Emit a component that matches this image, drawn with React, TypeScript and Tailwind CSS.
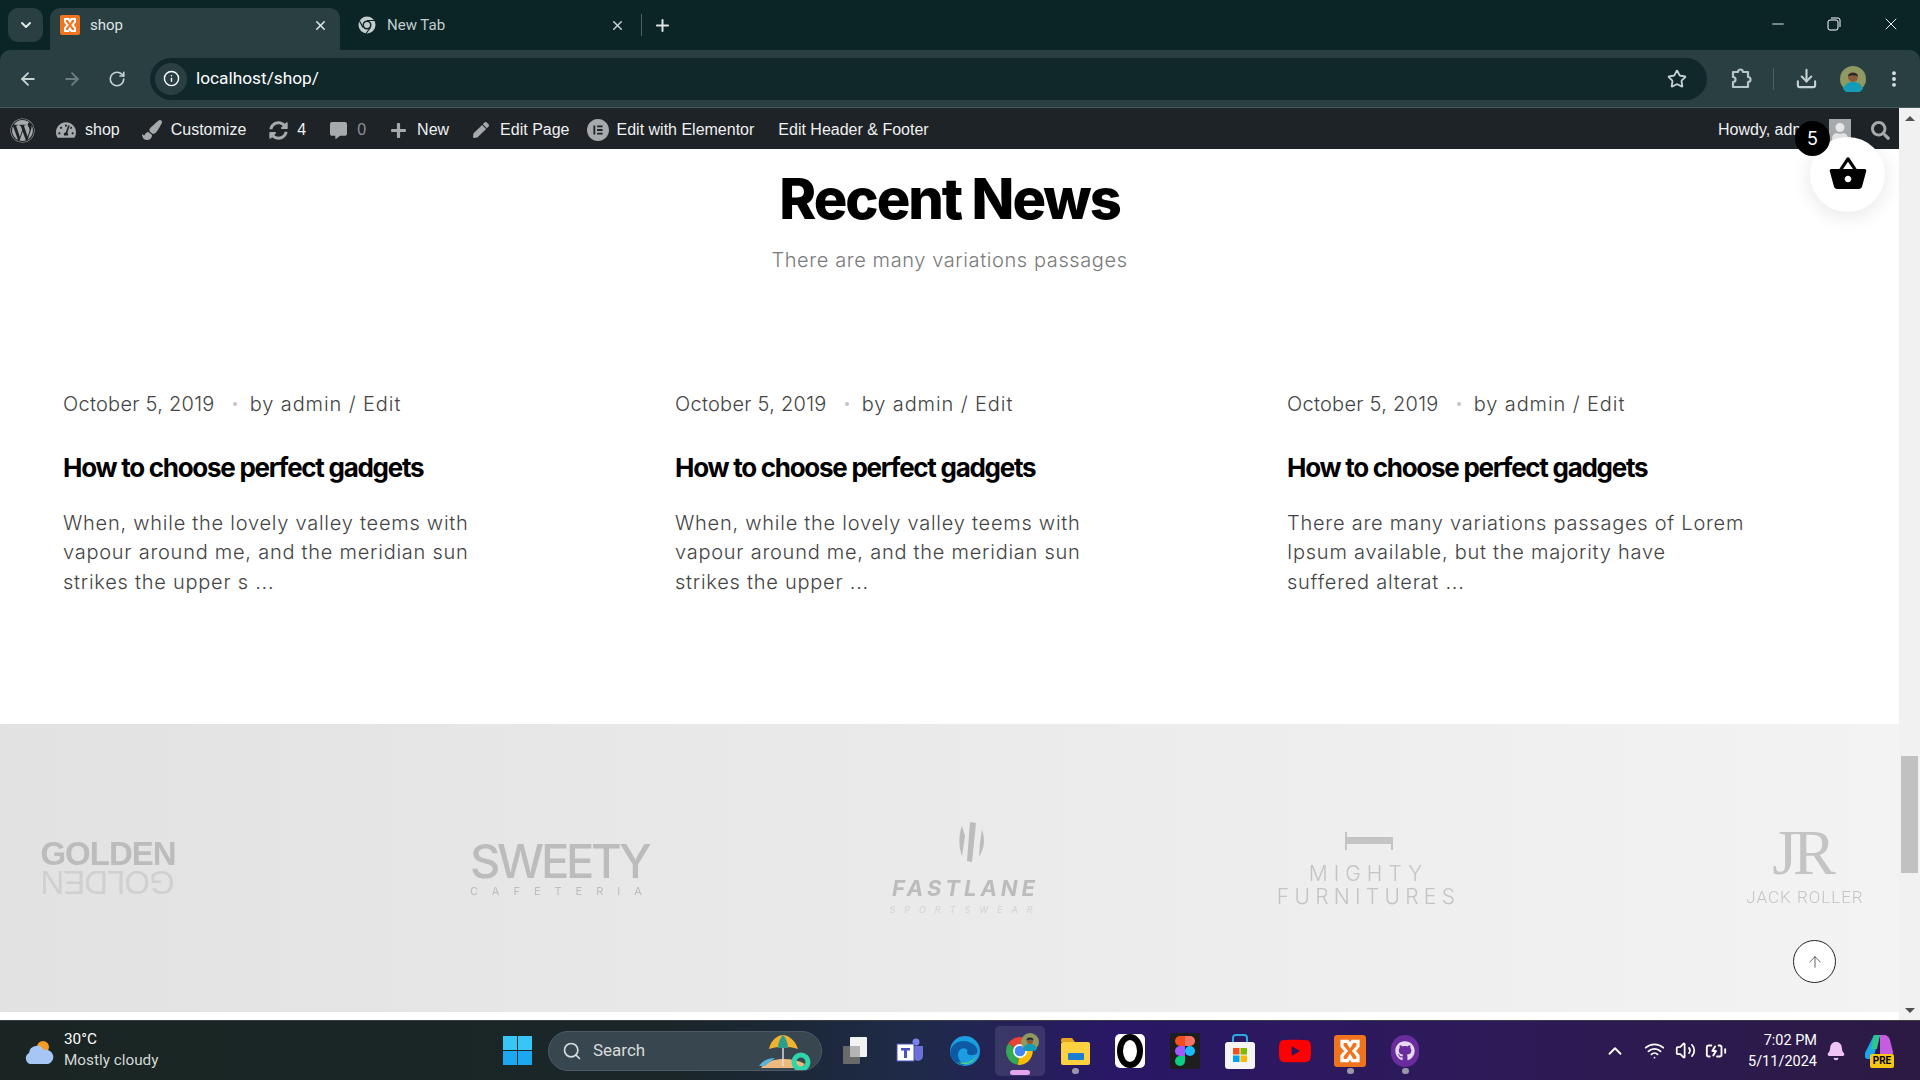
import { ArrowLeft, ArrowRight, ArrowUp, BatteryCharging, Bell, ChevronDown, ChevronUp, Download, Info, Minus, MoreVertical, Plus, RotateCw, Search, Star, Volume2, Wifi, X } from "lucide-react";
import { FaCommentAlt, FaGithub, FaPaintBrush, FaPen, FaPlus, FaSearch, FaSyncAlt, FaTachometerAlt, FaUser, FaWordpress, FaYoutube } from "react-icons/fa";
import { MdShoppingBasket } from "react-icons/md";
import { SiElementor } from "react-icons/si";

const posts = [
  ["When, while the lovely valley teems with", "vapour around me, and the meridian sun", "strikes the upper s ..."],
  ["When, while the lovely valley teems with", "vapour around me, and the meridian sun", "strikes the upper ..."],
  ["There are many variations passages of Lorem", "Ipsum available, but the majority have", "suffered alterat ..."],
];

function Xampp({ size = 20 }: { size?: number }) {
  return (
    <svg width={size} height={size} viewBox="0 0 20 20">
      <rect width="20" height="20" rx="2" fill="#f0741f" />
      <path d="M5 4h3.500l1.500 2.500 1.500-2.500h3.500v3l-2.500 3 2.500 3v3h-3.500l-1.500-2.500-1.500 2.500h-3.500v-3l2.500-3-2.500-3z" fill="none" stroke="#fff" strokeWidth="2" />
    </svg>
  );
}

function ChromeLogo({ size = 30 }: { size?: number }) {
  return (
    <svg width={size} height={size} viewBox="0 0 30 30">
      <path d="M15 15 4 8a13 13 0 0 1 22 0z" fill="#ea4335" />
      <path d="M15 15 4 8a13 13 0 0 0 9 20z" fill="#34a853" />
      <path d="M15 15h12a13 13 0 0 1-14 13z" fill="#fbbc05" />
      <circle cx="15" cy="15" r="6.500" fill="#fff" />
      <circle cx="15" cy="15" r="5" fill="#4285f4" />
    </svg>
  );
}

function ChromeMono() {
  return (
    <svg width="18" height="18" viewBox="0 0 18 18">
      <circle cx="9" cy="9" r="8.500" fill="#c3cdcd" />
      <circle cx="9" cy="9" r="4.500" fill="#0b2527" />
      <circle cx="9" cy="9" r="3" fill="#c3cdcd" />
      <path d="M9 4.500h8M5 11.500 1.500 5M12.500 11.500 8 17.500" stroke="#0b2527" strokeWidth="1.200" />
    </svg>
  );
}

function Avatar({ size }: { size: number }) {
  return (
    <svg width={size} height={size} viewBox="0 0 26 26">
      <circle cx="13" cy="13" r="13" fill="#8f9a63" />
      <path d="M3 23c2-6 6-7 10-7s8 1 10 7a13 13 0 0 1-20 0z" fill="#149bb5" />
      <circle cx="13" cy="11" r="5" fill="#8a5a3c" />
      <path d="M8 10c0-4 10-4 10 0-3-1-7-1-10 0z" fill="#1c2530" />
    </svg>
  );
}

function AdminItem({ icon, label, muted }: { icon: React.ReactNode; label: string; muted?: boolean }) {
  return (
    <div className="flex items-center gap-[8px]">
      <span className="flex w-[22px] justify-center text-[#a7aaad]">{icon}</span>
      <span className={muted ? "text-[#8c8f94]" : "text-[#f0f0f1]"}>{label}</span>
    </div>
  );
}

function TaskIcon({ children, dot, active }: { children: React.ReactNode; dot?: boolean; active?: boolean }) {
  return (
    <div className={`relative flex h-[50px] w-[50px] items-center justify-center rounded-[5px] ${active ? "bg-white/10" : ""}`}>
      {children}
      {dot && <span className="absolute bottom-[2px] left-[21.500px] h-[6px] w-[7px] rounded-full bg-[#9b96a8]" />}
      {active && <span className="absolute bottom-[1px] left-[15px] h-[5px] w-[20px] rounded-full bg-[#e3a6ef]" />}
    </div>
  );
}

export default function App() {
  return (
    <div className="flex h-[1080px] w-[1920px] flex-col overflow-hidden bg-[#0b2527] font-['Inter',sans-serif]">
      {/* tab strip */}
      <div className="flex h-[50px] shrink-0 items-end bg-[#0b2527] pl-[8px] font-['Roboto',sans-serif] text-[15px] text-[#dfe6e6]">
        <div className="mb-[8px] flex h-[34px] w-[35px] items-center justify-center rounded-[10px] bg-[#2a3f42]">
          <ChevronDown size={16} strokeWidth={3} />
        </div>
        <div className="ml-[7px] flex h-[42px] w-[290px] items-center rounded-t-[10px] bg-[#2a3f42] pb-[8px] pl-[10px] pr-[12px]">
          <Xampp />
          <span className="ml-[10px] flex-1">shop</span>
          <X size={15} strokeWidth={2.5} />
        </div>
        <div className="ml-[18px] flex h-[42px] w-[279px] items-center pb-[8px] pr-[12px] text-[#c3cdcd]">
          <ChromeMono />
          <span className="ml-[11px] flex-1">New Tab</span>
          <X size={15} strokeWidth={2.5} />
        </div>
        <div className="mb-[14px] ml-[4px] h-[22px] w-px bg-[#4d6062]" />
        <Plus size={19} strokeWidth={2.5} className="mb-[15px] ml-[11px]" />
        <div className="mb-[16px] ml-auto flex items-center gap-[40px] pr-[19px] text-white">
          <Minus size={18} strokeWidth={1.2} />
          <svg width="14" height="14" viewBox="0 0 14 14" fill="none" stroke="#fff" strokeWidth="1">
            <rect x="1" y="3" width="10" height="10" rx="2" />
            <path d="M4 1h7a2 2 0 0 1 2 2v7" />
          </svg>
          <X size={20} strokeWidth={1.1} />
        </div>
      </div>

      {/* toolbar */}
      <div className="flex h-[58px] shrink-0 items-center rounded-t-[10px] border-b border-[#485a5c] bg-[#2a3f42] pl-[18px] text-[#c6d2d2]">
        <ArrowLeft size={20} strokeWidth={2.2} className="shrink-0" />
        <ArrowRight size={20} strokeWidth={2.2} className="ml-[24px] shrink-0 text-[#6b7d7f]" />
        <RotateCw size={18} strokeWidth={2.2} className="ml-[26px] shrink-0" />
        <div className="ml-[24px] flex h-[42px] w-[1557px] shrink-0 items-center rounded-full bg-[#11282b] pl-[5px] pr-[20px]">
          <span className="flex h-[32px] w-[32px] items-center justify-center rounded-full bg-[#2a3f42]">
            <Info size={17} className="text-white" />
          </span>
          <span className="ml-[9px] flex-1 pt-[1px] font-['Roboto',sans-serif] text-[17.300px] text-white">localhost/shop/</span>
          <Star size={20} strokeWidth={2.2} />
        </div>
        <svg width="22" height="22" viewBox="0 0 22 22" fill="none" stroke="#b7c6c6" strokeWidth="2.200" strokeLinejoin="round" className="ml-[23px] shrink-0">
          <path d="M3 4h5a2.500 2.500 0 0 1 5 0h5v5a2.500 2.500 0 0 1 0 5v5H3v-5a2.500 2.500 0 0 0 0-5z" />
        </svg>
        <div className="ml-[21px] h-[22px] w-px shrink-0 bg-[#4d6062]" />
        <Download size={23} strokeWidth={2.2} className="ml-[21px] shrink-0" />
        <span className="ml-[22px] shrink-0"><Avatar size={26} /></span>
        <MoreVertical size={20} strokeWidth={2.6} className="ml-[18px] shrink-0 text-[#dfe6e6]" />
      </div>

      <div className="flex min-h-0 flex-1">
        <div className="relative flex w-[1899px] flex-col">
          {/* wp admin bar */}
          <div className="flex h-[41px] shrink-0 items-center bg-[#1d2327] pl-[10px] pt-[3px] font-['Liberation_Sans',sans-serif] text-[16px]">
            <FaWordpress size={25} className="text-[#a7aaad]" />
            <div className="ml-[20px] flex items-center gap-[21px]">
              <AdminItem icon={<FaTachometerAlt size={20} />} label="shop" />
              <AdminItem icon={<FaPaintBrush size={20} />} label="Customize" />
              <AdminItem icon={<FaSyncAlt size={19} />} label="4" />
              <AdminItem icon={<FaCommentAlt size={17} />} label="0" muted />
              <AdminItem icon={<FaPlus size={17} />} label="New" />
              <AdminItem icon={<FaPen size={16} />} label="Edit Page" />
              <div className="-ml-[4px]">
                <AdminItem icon={<SiElementor size={22} />} label="Edit with Elementor" />
              </div>
              <span className="ml-[3px] text-[#f0f0f1]">Edit Header &amp; Footer</span>
            </div>
            <div className="ml-auto flex items-center pr-[9px]">
              <span className="w-[111px] overflow-hidden whitespace-nowrap text-[#f0f0f1]">Howdy, admin</span>
              <span className="flex h-[22px] w-[22px] items-end justify-center overflow-hidden bg-[#a7aaad] text-[#e8e8e8]">
                <FaUser size={18} />
              </span>
              <FaSearch size={19} className="ml-[20px] text-[#a7aaad]" />
            </div>
          </div>

          {/* recent news */}
          <div className="h-[575px] shrink-0 overflow-hidden bg-white">
            <h2 className="mt-[18px] text-center text-[56px] font-extrabold leading-[64px] tracking-[-2px] text-black">Recent News</h2>
            <p className="mt-[14px] text-center text-[20px] font-light leading-[30px] tracking-[0.600px] text-[#7a7a7a]">There are many variations passages</p>
            <div className="mt-[114px] grid grid-cols-[612px_612px_612px] pl-[63px]">
              {posts.map((lines, i) => (
                <div key={i}>
                  <div className="flex items-center text-[20px] font-light leading-[30px] text-[#444]">
                    <span className="tracking-[0.270px]">October 5, 2019</span>
                    <span className="ml-[18px] mr-[13px] h-[4px] w-[4px] rounded-full bg-[#c4c4c4]" />
                    <span className="tracking-[0.900px]">by admin / Edit</span>
                  </div>
                  <h3 className="mt-[27px] text-[26px] font-bold leading-[44px] tracking-[-1.270px] text-black">How to choose perfect gadgets</h3>
                  <div className="mt-[19px] whitespace-nowrap text-[20px] font-light leading-[29.400px] tracking-[0.750px] text-[#444]">
                    {lines.map((line) => <div key={line}>{line}</div>)}
                  </div>
                </div>
              ))}
            </div>
          </div>

          {/* brand logos */}
          <div className="flex h-[288px] shrink-0 items-center bg-gradient-to-r from-[#e2e2e2] to-[#f3f3f3] pl-[38px] text-[#bcbcbc]">
            <div className="w-[140px] text-center font-['Liberation_Sans',sans-serif] tracking-[-1px] blur-[0.5px]">
              <div className="text-[33px] font-bold leading-[27px]">GOLDEN</div>
              <div className="mt-[2px] -scale-100 text-[33px] leading-[27px] text-[#d0d0d0]">GOLDEN</div>
            </div>
            <div className="ml-[292px] w-[180px] whitespace-nowrap blur-[0.5px]">
              <div className="text-[47px] font-medium leading-[46px] tracking-[-3.300px]">SWEETY</div>
              <div className="text-[11px] leading-[14px] tracking-[14px]">CAFETERIA</div>
            </div>
            <div className="ml-[243px] flex w-[145px] flex-col items-center whitespace-nowrap blur-[0.5px]">
              <svg width="42" height="42" viewBox="0 0 42 42" fill="#bcbcbc" className="ml-[12px]">
                <path d="M19 1l6 1-4 39-5-1z" />
                <path d="M11 5c-4 10-3 22 0 30l3-20zM31 8c3 9 3 19-3 28l1-14z" />
              </svg>
              <div className="mt-[13px] text-[22px] font-bold italic leading-[24px] tracking-[4px]">FASTLANE</div>
              <div className="mt-[4px] text-[9px] italic leading-[12px] tracking-[9px] text-[#d2d2d2]">SPORTSWEAR</div>
            </div>
            <div className="ml-[242px] flex w-[177px] flex-col items-center whitespace-nowrap pt-[3px] font-light text-[#c4c4c4] blur-[0.5px]">
              <svg width="48" height="18" viewBox="0 0 48 18" fill="#c4c4c4">
                <path d="M0 0h2v18h-2zM2 5h44v7h-44zM46 5h2v13h-2z" />
              </svg>
              <div className="mt-[12px] text-[21px] leading-[23px] tracking-[6px]">MIGHTY</div>
              <div className="text-[21px] leading-[23px] tracking-[5.300px]">FURNITURES</div>
            </div>
            <div className="ml-[291px] flex w-[114px] flex-col items-center whitespace-nowrap text-[#c4c4c4] blur-[0.5px]">
              <div className="-ml-[6px] font-['Liberation_Serif',serif] text-[64px] leading-[46px] tracking-[-4px]">JR</div>
              <div className="mt-[11px] font-['Roboto',sans-serif] text-[17px] font-light leading-[20px] tracking-[1px]">JACK ROLLER</div>
            </div>
          </div>
          <div className="flex-1 bg-white" />

          {/* overlays */}
          <div className="absolute left-[1810px] top-[29px] flex h-[75px] w-[75px] items-center justify-center rounded-full bg-white pb-[1px] shadow-[0_4px_20px_rgba(0,0,0,0.1)]">
            <MdShoppingBasket size={40} className="text-black" />
          </div>
          <div className="absolute left-[1795px] top-[13px] flex h-[35px] w-[35px] items-center justify-center rounded-full bg-black text-[18px] text-white">5</div>
          <div className="absolute left-[1793px] top-[832px] flex h-[43px] w-[43px] items-center justify-center rounded-full border border-[#222] bg-white">
            <ArrowUp size={18} strokeWidth={1} className="text-[#333]" />
          </div>
        </div>

        {/* scrollbar */}
        <div className="flex w-[21px] shrink-0 flex-col items-center justify-between bg-[#f1f1f1] pb-[7px] pt-[8px]">
          <span className="h-0 w-0 border-x-[5px] border-b-[5px] border-x-transparent border-b-[#505050]" />
          <span className="mb-[115px] mt-[614px] h-[117px] w-[17px] bg-[#c1c1c1]" />
          <span className="h-0 w-0 border-x-[5px] border-t-[5px] border-x-transparent border-t-[#505050]" />
        </div>
      </div>

      {/* windows taskbar */}
      <div className="relative flex h-[60px] shrink-0 items-center border-t border-[#3a3d44] bg-[linear-gradient(90deg,#1a2523_0%,#1a2628_35%,#1f2a4a_48%,#2a1766_58%,#2d1a5a_75%,#2c1a44_100%)] font-['Roboto',sans-serif] text-white">
        <svg width="30" height="30" viewBox="0 0 30 30" className="absolute left-[24px] top-[16px]">
          <circle cx="19" cy="10" r="6" fill="#f59a23" />
          <path d="M6 27a6 6 0 0 1-1-11 8 8 0 0 1 15-3 7 7 0 0 1 4 14z" fill="#a8c6f5" />
        </svg>
        <div className="absolute left-[64px] top-[8px] text-[15.300px] leading-[21px]">
          <div>30°C</div>
          <div className="text-[#d5d8d8]">Mostly cloudy</div>
        </div>
        <div className="ml-[503px] grid h-[29px] w-[29px] grid-cols-2 gap-[1.500px]">
          <span className="bg-[#38c6f7]" />
          <span className="bg-[#38c6f7]" />
          <span className="bg-[#1ba8f0]" />
          <span className="bg-[#1ba8f0]" />
        </div>
        <div className="ml-[16px] flex h-[40px] w-[274px] items-center rounded-full border border-[#4d5a66] bg-[#38464f] pl-[13px] pr-[8px] text-[17px] text-[#d8dcdc]">
          <Search size={20} strokeWidth={2} />
          <span className="ml-[11px] flex-1">Search</span>
          <svg width="56" height="38" viewBox="0 0 56 38">
            <path d="M4 36c6-10 30-12 44-4l-4 4z" fill="#eeb97c" />
            <path d="M2 34c4-6 10-8 16-8l-10 8z" fill="#57b6d8" />
            <path d="M26 12v22" stroke="#d8dcdc" strokeWidth="1.500" />
            <path d="M12 17C14 7 22 3 26 3s12 4 15 14c-10-3-19-3-29 0z" fill="#f1b32e" />
            <path d="M21 16c0-6 3-11 5-13 3 3 5 8 5 13z" fill="#2c9c8c" />
            <circle cx="44" cy="30" r="7" fill="none" stroke="#2fd6ab" strokeWidth="5" />
          </svg>
        </div>
        <div className="ml-[8px] flex items-center gap-[5px]">
          <TaskIcon>
            <svg width="30" height="30" viewBox="0 0 30 30">
              <rect x="3" y="10" width="17" height="18" rx="1" fill="#6a6a6a" />
              <rect x="10" y="1" width="17" height="20" rx="1" fill="#f3f3f3" />
              <rect x="10" y="10" width="10" height="11" fill="#b5b5b5" />
            </svg>
          </TaskIcon>
          <TaskIcon>
            <svg width="30" height="30" viewBox="0 0 30 30">
              <circle cx="21" cy="6" r="3.500" fill="#7b83eb" />
              <path d="M14 10h14v10a5 5 0 0 1-10 0h-4z" fill="#6a70d8" />
              <rect x="2" y="8" width="17" height="17" fill="#fff" stroke="#4b53bc" />
              <path d="M6 12h9v2.500h-3V22h-3v-7.500H6z" fill="#4b53bc" />
            </svg>
          </TaskIcon>
          <TaskIcon>
            <svg width="32" height="32" viewBox="0 0 32 32">
              <circle cx="16" cy="16" r="15" fill="#1b9de2" />
              <path d="M1 18C2 8 12 4 20 7c6 2 10 7 8 11-2 3-9 3-10 0 2-3-2-6-6-4-5 3-4 12 4 16-8 0-14-5-15-12z" fill="#0c59a4" />
              <path d="M28 20c-3 8-12 12-19 7 7 2 15 0 19-7z" fill="#52d17c" />
            </svg>
          </TaskIcon>
          <TaskIcon active>
            <ChromeLogo size={32} />
            <span className="absolute right-[6px] top-[7px]"><Avatar size={18} /></span>
          </TaskIcon>
          <TaskIcon dot>
            <svg width="32" height="32" viewBox="0 0 32 32">
              <path d="M2 5a2 2 0 0 1 2-2h9l3 4h-14z" fill="#e9a41b" />
              <rect x="2" y="7" width="29" height="23" rx="2" fill="#fdd13f" />
              <rect x="9" y="18" width="16" height="7" rx="1" fill="#1a7fd0" />
            </svg>
          </TaskIcon>
          <TaskIcon>
            <svg width="30" height="34" viewBox="0 0 30 34">
              <rect width="30" height="34" rx="5" fill="#fff" />
              <ellipse cx="15" cy="17" rx="10" ry="14" fill="none" stroke="#000" strokeWidth="6" />
            </svg>
          </TaskIcon>
          <TaskIcon>
            <svg width="30" height="36" viewBox="0 0 30 36">
              <rect width="30" height="36" rx="3" fill="#1e1e1e" />
              <path d="M15 3h-5a5 5 0 0 0 0 10h5z" fill="#f24e1e" />
              <path d="M15 3h5a5 5 0 0 1 0 10h-5z" fill="#ff7262" />
              <path d="M15 13h-5a5 5 0 0 0 0 10h5z" fill="#a259ff" />
              <circle cx="20" cy="18" r="5" fill="#1abcfe" />
              <path d="M10 23h5v5a5 5 0 1 1-5-5z" fill="#0acf83" />
            </svg>
          </TaskIcon>
          <TaskIcon>
            <svg width="30" height="36" viewBox="0 0 30 36">
              <path d="M8 10V5a3 3 0 0 1 3-3h8a3 3 0 0 1 3 3v5" fill="none" stroke="#27a9e0" strokeWidth="2" />
              <rect y="9" width="30" height="27" rx="3" fill="#f5f5f5" />
              <rect x="8" y="15" width="6.500" height="6.500" fill="#f25022" />
              <rect x="15.500" y="15" width="6.500" height="6.500" fill="#7fba00" />
              <rect x="8" y="22.500" width="6.500" height="6.500" fill="#00a4ef" />
              <rect x="15.500" y="22.500" width="6.500" height="6.500" fill="#ffb900" />
            </svg>
          </TaskIcon>
          <TaskIcon>
            <FaYoutube size={34} className="text-[#f00]" />
          </TaskIcon>
          <TaskIcon dot>
            <Xampp size={32} />
          </TaskIcon>
          <TaskIcon dot>
            <span className="flex h-[32px] w-[28px] items-center justify-center rounded-full bg-[#6a2c9c]">
              <FaGithub size={20} className="text-[#e6d9f0]" />
            </span>
          </TaskIcon>
        </div>
        <div className="ml-auto flex items-center pr-[25px]">
          <ChevronUp size={22} strokeWidth={2} />
          <Wifi size={21} strokeWidth={2} className="ml-[18px]" />
          <Volume2 size={21} strokeWidth={2} className="ml-[10px]" />
          <BatteryCharging size={22} strokeWidth={2} className="ml-[9px]" />
          <div className="ml-[21px] text-right text-[14.500px] leading-[21px]">
            <div>7:02 PM</div>
            <div>5/11/2024</div>
          </div>
          <Bell size={20} fill="#f0c4f5" className="ml-[9px] text-[#f0c4f5]" />
          <div className="relative ml-[19px] h-[34px] w-[30px]">
            <svg width="28" height="26" viewBox="0 0 28 26" className="absolute left-0 top-0">
              <path d="M9 1h6l-7 24H3C0 25-1 22 0 19z" fill="#1aa7e8" />
              <path d="M15 1h4c3 0 5 2 6 5l3 12c0 4-3 7-7 7h-6z" fill="#c65de0" />
              <path d="M9 1h6l-3 14H6z" fill="#30c48d" />
            </svg>
            <span className="absolute bottom-0 left-[5px] flex h-[14px] w-[24px] items-center justify-center rounded-[2px] bg-[#f5c518] text-[10px] font-bold leading-none text-black">PRE</span>
          </div>
        </div>
      </div>
    </div>
  );
}
